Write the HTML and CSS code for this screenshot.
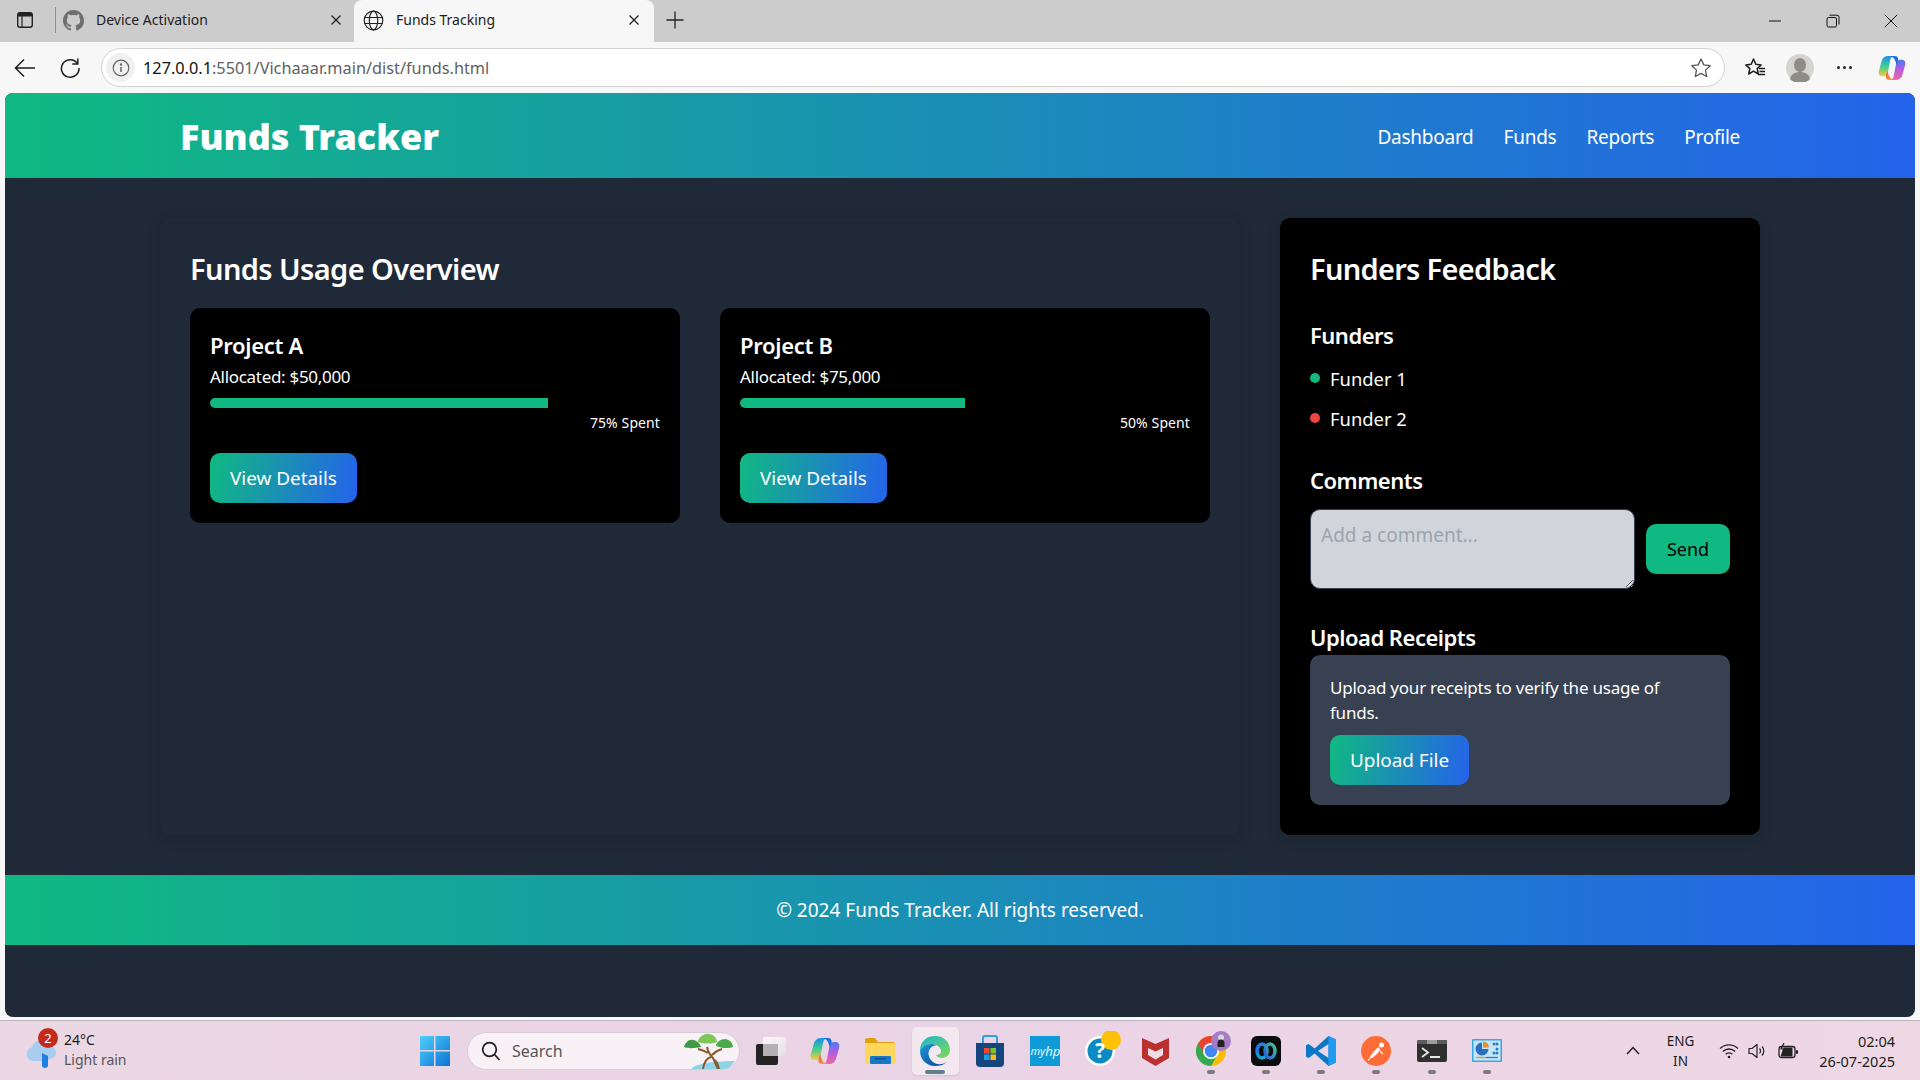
FILE: index.html
```html
<!DOCTYPE html>
<html lang="en">
<head>
    <meta charset="UTF-8">
    <meta name="viewport" content="width=device-width, initial-scale=1.0">
    <title>Funds Tracking</title>
    <link rel="stylesheet" href="styles.css">
</head>
<body>
    <!-- browser tabs -->
    <div class="tabstrip">
        <span class="strip-btn">
            <svg width="20" height="20" viewBox="0 0 20 20"><rect x="2.7" y="2.7" width="14.6" height="14.6" rx="2.5" fill="none" stroke="#222" stroke-width="1.4"/><path d="M3 3.5a1 1 0 0 1 1-1h12a1 1 0 0 1 1 1v3H3z" fill="#222"/><path d="M7 6v11" stroke="#222" stroke-width="1.2"/></svg>
        </span>
        <span class="tab-sep"></span>
        <div class="tab">
            <svg width="21" height="21" viewBox="0 0 16 16"><path fill="#6e6e6e" d="M8 0C3.58 0 0 3.58 0 8c0 3.54 2.29 6.53 5.47 7.59.4.07.55-.17.55-.38 0-.19-.01-.82-.01-1.49-2.01.37-2.53-.49-2.69-.94-.09-.23-.48-.94-.82-1.13-.28-.15-.68-.52-.01-.53.63-.01 1.08.58 1.23.82.72 1.21 1.87.87 2.33.66.07-.52.28-.87.51-1.07-1.78-.2-3.64-.89-3.64-3.95 0-.87.31-1.59.82-2.15-.08-.2-.36-1.02.08-2.12 0 0 .67-.21 2.2.82.64-.18 1.32-.27 2-.27.68 0 1.36.09 2 .27 1.53-1.04 2.2-.82 2.2-.82.44 1.1.16 1.92.08 2.12.51.56.82 1.27.82 2.15 0 3.07-1.87 3.75-3.65 3.95.29.25.54.73.54 1.48 0 1.07-.01 1.93-.01 2.2 0 .21.15.46.55.38A8.013 8.013 0 0016 8c0-4.42-3.58-8-8-8z"/></svg>
            <span class="tab-title">Device Activation</span>
            <svg class="tab-close" width="12" height="12" viewBox="0 0 12 12"><path d="M1.5 1.5l9 9M10.5 1.5l-9 9" stroke="#222" stroke-width="1.3"/></svg>
        </div>
        <div class="tab tab-active">
            <svg width="21" height="21" viewBox="0 0 21 21" fill="none" stroke="#222" stroke-width="1.2"><circle cx="10.5" cy="10.5" r="9.3"/><ellipse cx="10.5" cy="10.5" rx="4.2" ry="9.3"/><path d="M1.6 7.5h17.8M1.6 13.5h17.8"/></svg>
            <span class="tab-title">Funds Tracking</span>
            <svg class="tab-close" width="12" height="12" viewBox="0 0 12 12"><path d="M1.5 1.5l9 9M10.5 1.5l-9 9" stroke="#222" stroke-width="1.3"/></svg>
        </div>
        <svg class="tab-plus" width="18" height="18" viewBox="0 0 18 18"><path d="M9 .5v17M.5 9h17" stroke="#222" stroke-width="1.3"/></svg>
        <div class="win-controls">
            <svg width="14" height="14" viewBox="0 0 14 14"><path d="M1 7h12" stroke="#111" stroke-width="1"/></svg>
            <svg width="14" height="14" viewBox="0 0 14 14" fill="none" stroke="#111" stroke-width="1"><rect x="1" y="3.500" width="9.500" height="9.500" rx="1.500"/><path d="M3.500 1.200h7.500a2 2 0 0 1 2 2v7.300"/></svg>
            <svg width="14" height="14" viewBox="0 0 14 14"><path d="M.8.8l12.400 12.400M13.200.8L.8 13.200" stroke="#111" stroke-width="1"/></svg>
        </div>
    </div>

    <!-- address bar -->
    <div class="toolbar">
        <svg class="tool-back" width="22" height="20" viewBox="0 0 22 20" fill="none" stroke="#1c1c1c" stroke-width="1.5"><path d="M21 10H2M10 1.5L1.5 10l8.500 8.500"/></svg>
        <svg class="tool-reload" width="22" height="22" viewBox="0 0 22 22" fill="none" stroke="#1c1c1c" stroke-width="1.5"><path d="M18.500 6.500A8.800 8.800 0 1 0 20 11"/><path d="M18.800 1.500v5.500h-5.500"/></svg>
        <div class="urlbar">
            <span class="url-info">
                <svg width="18" height="18" viewBox="0 0 18 18" fill="none" stroke="#666" stroke-width="1.2"><circle cx="9" cy="9" r="7.800"/><path d="M9 8v5" stroke-width="1.500"/><circle cx="9" cy="5.500" r=".6" fill="#666"/></svg>
            </span>
            <span class="url-text"><span class="url-host">127.0.0.1</span>:5501/Vichaaar.main/dist/funds.html</span>
            <svg class="url-star" width="22" height="22" viewBox="0 0 22 22"><path d="M11 2l2.800 5.900 6.400.8-4.700 4.400 1.200 6.400L11 16.400l-5.700 3.100 1.200-6.400-4.700-4.400 6.400-.8z" fill="none" stroke="#555" stroke-width="1.300" stroke-linejoin="round"/></svg>
        </div>
        <svg class="tool-fav" width="22" height="22" viewBox="0 0 22 22" fill="none" stroke="#1c1c1c" stroke-width="1.500"><path d="M9.500 2l2.300 5.300 5.400.6-4 3.700 1.100 5.400-4.800-2.800-4.800 2.800 1.100-5.400-4-3.700 5.400-.6z" stroke-linejoin="round"/><path d="M15 11.500h6M15.500 14.500h5.500M14 17.500h7" stroke-width="1.300"/></svg>
        <svg class="tool-avatar" width="28" height="28" viewBox="0 0 28 28"><circle cx="14" cy="14" r="14" fill="#d6d4d0"/><ellipse cx="14" cy="11" rx="6" ry="7" fill="#8f8c87"/><path d="M4 25c1-5 5-7 10-7s9 2 10 7a14 14 0 0 1-20 0z" fill="#8f8c87"/></svg>
        <span class="tool-dots"><i></i><i></i><i></i></span>
        <svg class="tool-copilot" width="28" height="26" viewBox="0 0 30 28">
            <defs>
                <linearGradient id="copA" x1="0" y1="0" x2="0" y2="1"><stop offset="0" stop-color="#1e90e8"/><stop offset=".5" stop-color="#3ccf91"/><stop offset="1" stop-color="#ffc83d"/></linearGradient>
                <linearGradient id="copB" x1="0" y1="0" x2="0" y2="1"><stop offset="0" stop-color="#4a7bf0"/><stop offset=".5" stop-color="#b85be0"/><stop offset="1" stop-color="#f06a9a"/></linearGradient>
                <linearGradient id="copC" x1="0" y1="0" x2="1" y2="1"><stop offset="0" stop-color="#f0503c"/><stop offset="1" stop-color="#ffb347"/></linearGradient>
            </defs>
            <path d="M11 1h7c-3 0-4.500 2-5 5l-2.500 13c-.5 3-2.500 4-4.500 4H4.500C1.500 23 0 20.500.8 17.500L4 6c1-3 3.500-5 7-5z" fill="url(#copA)"/>
            <path d="M19 27h-7c3 0 4.500-2 5-5l2.500-13c.5-3 2.500-4 4.500-4h1.500c3 0 4.500 2.500 3.700 5.500L26 22c-1 3-3.500 5-7 5z" fill="url(#copB)"/>
            <path d="M11 1h7c2.500 0 4 2 3.500 4.500L20 11c-.5-2-1-4-2-6-1-2-3-4-7-4z" fill="#1a6fe0"/>
            <path d="M19 27h-7c-2.500 0-4-2-3.500-4.500L10 17c.5 2 1 4 2 6 1 2 3 4 7 4z" fill="url(#copC)"/>
        </svg>
    </div>

    <!-- the page itself -->
    <div class="site">
        <header class="site-header">
            <div class="header-inner">
                <h1 class="brand">Funds Tracker</h1>
                <nav class="site-nav">
                    <a href="#">Dashboard</a>
                    <a href="#">Funds</a>
                    <a href="#">Reports</a>
                    <a href="#">Profile</a>
                </nav>
            </div>
        </header>

        <main class="content">
            <section class="panel panel-usage">
                <h2>Funds Usage Overview</h2>
                <div class="project-grid">
                    <div class="project-card">
                        <h3>Project A</h3>
                        <p class="allocated">Allocated: $50,000</p>
                        <div class="bar"><div class="bar-fill" style="width: 75%"></div></div>
                        <p class="spent">75% Spent</p>
                        <button class="btn-gradient">View Details</button>
                    </div>
                    <div class="project-card">
                        <h3>Project B</h3>
                        <p class="allocated">Allocated: $75,000</p>
                        <div class="bar"><div class="bar-fill" style="width: 50%"></div></div>
                        <p class="spent">50% Spent</p>
                        <button class="btn-gradient">View Details</button>
                    </div>
                </div>
            </section>

            <aside class="panel panel-feedback">
                <h2>Funders Feedback</h2>
                <h3>Funders</h3>
                <ul class="funder-list">
                    <li><span class="dot dot-green"></span>Funder 1</li>
                    <li><span class="dot dot-red"></span>Funder 2</li>
                </ul>
                <h3>Comments</h3>
                <div class="comment-row">
                    <textarea placeholder="Add a comment..."></textarea>
                    <button class="btn-send">Send</button>
                </div>
                <h3 class="upload-title">Upload Receipts</h3>
                <div class="upload-box">
                    <p>Upload your receipts to verify the usage of funds.</p>
                    <button class="btn-gradient">Upload File</button>
                </div>
            </aside>
        </main>

        <footer class="site-footer">© 2024 Funds Tracker. All rights reserved.</footer>
    </div>

    <!-- windows taskbar -->
    <div class="taskbar">
        <div class="weather">
            <span class="weather-icon">
                <svg width="32" height="36" viewBox="0 0 32 36">
                    <path d="M8 28a7 7 0 0 1-1-13.800A9 9 0 0 1 24 13a6.500 6.500 0 0 1 1 13l-3 2z" fill="#a9cdf0"/>
                    <path d="M17 20l6 3v9a3 3 0 0 1-6 0z" fill="#1f7fe0"/>
                </svg>
                <span class="weather-badge">2</span>
            </span>
            <div class="weather-text">
                <span>24°C</span>
                <span class="weather-sub">Light rain</span>
            </div>
        </div>

        <svg class="win-logo" width="30" height="30" viewBox="0 0 30 30">
            <defs><linearGradient id="winG" x1="0" y1="0" x2="1" y2="1"><stop offset="0" stop-color="#4fd0fb"/><stop offset="1" stop-color="#0a74d6"/></linearGradient></defs>
            <path d="M1 0h13v14H0V1a1 1 0 0 1 1-1zM15.500 0H29a1 1 0 0 1 1 1v13H15.500zM0 15.500h14V30H1a1 1 0 0 1-1-1zM15.500 15.500H30V29a1 1 0 0 1-1 1H15.500z" fill="url(#winG)"/>
        </svg>

        <div class="searchbox">
            <svg width="20" height="20" viewBox="0 0 20 20" fill="none" stroke="#222" stroke-width="1.800"><circle cx="8.500" cy="8.500" r="6.800"/><path d="M13.500 13.500l5 5.500"/></svg>
            <span class="search-text">Search</span>
            <svg class="search-tree" width="52" height="36" viewBox="0 0 52 36">
                <path d="M8 36c4-6 28-8 44-8-3 4-5 6-8 8z" fill="#8fd4e6"/>
                <path d="M24 14c1 5 4 9 6 11l5 11M28 24c-4 1-7 5-8 12M31 27c2 1 4 4 5 9M25 20c-3-2-6-3-10-4M29 22c3-3 6-5 10-6" fill="none" stroke="#8a5a2b" stroke-width="2"/>
                <path d="M1 14c1-4 5-8 9-7 3 0 7 3 8 7-5 1-12 2-17 0z" fill="#3f9a45"/>
                <path d="M15 9c0-5 7-9 11-8 4 0 8 4 8 8-5 2-13 2-19 0z" fill="#7ec857"/>
                <path d="M33 13c0-4 5-7 9-7s8 4 8 8c-5 2-12 1-17-1z" fill="#4ca84a"/>
            </svg>
        </div>

        <div class="task-icons">
            <span class="task-icon">
                <svg width="32" height="32" viewBox="0 0 32 32">
                    <defs><linearGradient id="viewG" x1="0" y1="0" x2="1" y2="1"><stop offset="0" stop-color="#fafafa"/><stop offset="1" stop-color="#e6dde4"/></linearGradient></defs>
                    <rect x="2" y="9" width="22" height="21" rx="2" fill="#232323"/>
                    <rect x="9" y="2" width="23" height="19" rx="2" fill="url(#viewG)"/>
                    <rect x="9" y="9" width="15" height="12" fill="#b4b0b2"/>
                </svg>
            </span>
            <span class="task-icon">
                <svg width="30" height="28" viewBox="0 0 30 28">
                    <path d="M11 1h7c-3 0-4.500 2-5 5l-2.500 13c-.5 3-2.500 4-4.500 4H4.500C1.500 23 0 20.500.8 17.500L4 6c1-3 3.500-5 7-5z" fill="url(#copA)"/>
                    <path d="M19 27h-7c3 0 4.500-2 5-5l2.500-13c.5-3 2.500-4 4.500-4h1.500c3 0 4.500 2.500 3.700 5.500L26 22c-1 3-3.500 5-7 5z" fill="url(#copB)"/>
                    <path d="M11 1h7c2.500 0 4 2 3.500 4.500L20 11c-.5-2-1-4-2-6-1-2-3-4-7-4z" fill="#1a6fe0"/>
                    <path d="M19 27h-7c-2.500 0-4-2-3.500-4.500L10 17c.5 2 1 4 2 6 1 2 3 4 7 4z" fill="url(#copC)"/>
                </svg>
            </span>
            <span class="task-icon">
                <svg width="30" height="26" viewBox="0 0 30 26"><path d="M0 2a2 2 0 0 1 2-2h8l3 4h15a2 2 0 0 1 2 2v20H0z" fill="#e0a10f"/><path d="M0 5h30v21H0z" fill="#ffd65c"/><rect x="5" y="18" width="21" height="8" rx="1" fill="#1878c8"/><rect x="10" y="20" width="11" height="1.500" fill="#0e4f8c"/></svg>
            </span>
            <span class="task-icon task-active">
                <svg width="30" height="30" viewBox="0 0 30 30">
                    <defs>
                        <linearGradient id="edgeA" x1="0" y1="0" x2="1" y2="1"><stop offset="0" stop-color="#1db4d6"/><stop offset="1" stop-color="#7ddb4f"/></linearGradient>
                        <linearGradient id="edgeB" x1="0" y1="0" x2="1" y2="1"><stop offset="0" stop-color="#1b9bd8"/><stop offset="1" stop-color="#0c3f96"/></linearGradient>
                    </defs>
                    <path d="M15 0c9 0 15 6 15 14 0 5-4 8-8 8-3 0-5-1-6-3 3 0 5-1 5-4 0-4-5-7-10-7C7 8 2 11 0 15 0 6 6 0 15 0z" fill="url(#edgeA)"/>
                    <path d="M0 15c2-4 6-7 11-7 2 0 4 .5 5.500 1.500C12 9 8.500 13 8.500 17.500c0 5 4 9.500 9 10.500 3 .5 6 0 9-2-3 3-7 4-11.500 4C6 30 0 23 0 15z" fill="url(#edgeB)"/>
                </svg>
            </span>
            <span class="task-icon">
                <svg width="30" height="32" viewBox="0 0 30 32"><path d="M8 9V3a2 2 0 0 1 2-2h10a2 2 0 0 1 2 2v6" fill="none" stroke="#28a0e8" stroke-width="2"/><path d="M1 8h28v20a4 4 0 0 1-4 4H5a4 4 0 0 1-4-4z" fill="#14457c"/><rect x="9" y="13" width="5.500" height="5.500" fill="#ee4b2b"/><rect x="15.500" y="13" width="5.500" height="5.500" fill="#7cc031"/><rect x="9" y="19.500" width="5.500" height="5.500" fill="#1d9fe8"/><rect x="15.500" y="19.500" width="5.500" height="5.500" fill="#fdb813"/></svg>
            </span>
            <span class="task-icon">
                <span class="myhp">my<b>hp</b></span>
            </span>
            <span class="task-icon">
                <svg width="40" height="40" viewBox="0 0 40 40"><circle cx="19" cy="20" r="15" fill="#fff"/><circle cx="19" cy="20" r="12.500" fill="#0b8ac4"/><circle cx="30" cy="9" r="10" fill="#ffc107"/><text x="19" y="27" class="help-mark">?</text></svg>
            </span>
            <span class="task-icon">
                <svg width="27" height="30" viewBox="0 0 27 30"><path d="M0 2l13.500 6L27 2v20l-13.500 8L0 22z" fill="#bb302e"/><path d="M6 12l7.500 3.500L21 12v7l-7.500 4.500L6 19z" fill="#efdde6"/></svg>
            </span>
            <span class="task-icon task-running">
                <svg width="40" height="40" viewBox="0 0 40 40">
                    <circle cx="20" cy="20" r="15" fill="#fbbc04"/>
                    <path d="M7 12.500A15 15 0 0 0 20 35l6.500-11.250L20 20z" fill="#34a853"/>
                    <path d="M7 12.500a15 15 0 0 1 26 0H20l-6.500 11.250z" fill="#ea4335"/>
                    <circle cx="20" cy="20" r="8" fill="#fff"/><circle cx="20" cy="20" r="6.300" fill="#4285f4"/>
                    <circle cx="30" cy="10" r="10" fill="#a77bc5"/>
                    <circle cx="30" cy="6.500" r="3" fill="#d8d8d8"/><path d="M26.500 16v-4a3.500 3.500 0 0 1 7 0v4z" fill="#222"/>
                </svg>
            </span>
            <span class="task-icon task-running">
                <svg width="30" height="30" viewBox="0 0 30 30">
                    <defs>
                        <linearGradient id="webA" x1="0" y1="0" x2="1" y2="1"><stop offset="0" stop-color="#1c6fe8"/><stop offset="1" stop-color="#19b8c8"/></linearGradient>
                        <linearGradient id="webB" x1="1" y1="0" x2="0" y2="1"><stop offset="0" stop-color="#3fc98a"/><stop offset="1" stop-color="#2758e0"/></linearGradient>
                    </defs>
                    <rect width="30" height="30" rx="6" fill="#0b0b0e"/>
                    <ellipse cx="11" cy="15" rx="5" ry="7" fill="none" stroke="url(#webA)" stroke-width="3.500"/>
                    <ellipse cx="19" cy="15" rx="5" ry="7" fill="none" stroke="url(#webB)" stroke-width="3.500"/>
                </svg>
            </span>
            <span class="task-icon task-running">
                <svg width="30" height="30" viewBox="0 0 100 100"><path fill-rule="evenodd" d="M75 0L29 42 9 27 0 31v38l9 4 20-15 46 42 25-12V12zM75 27L40 50l35 23z" fill="#0a78c4"/><path d="M75 0l25 12v76l-25 12z" fill="#1f9cf0"/></svg>
            </span>
            <span class="task-icon task-running">
                <svg width="30" height="30" viewBox="0 0 30 30"><circle cx="15" cy="15" r="15" fill="#ff6c37"/><path d="M8 23l2-4 5-6 3-2 1 3-3 4-5 4z" fill="#fff"/><circle cx="20.500" cy="9" r="2.500" fill="#fff"/><path d="M19 15l3 3M8 23l-1 1.500" stroke="#fff" stroke-width="1.200"/></svg>
            </span>
            <span class="task-icon task-running">
                <svg width="30" height="22" viewBox="0 0 30 22"><rect width="30" height="22" rx="2" fill="#2f2f2f"/><path d="M0 2a2 2 0 0 1 2-2h28v4H0z" fill="#5c5c5c"/><rect x="10" y="0" width="10" height="4" fill="#9a9a9a"/><path d="M5 8l6 4.500L5 17" fill="none" stroke="#e8e8e8" stroke-width="1.800"/><path d="M13 17h10" stroke="#e8e8e8" stroke-width="2"/></svg>
            </span>
            <span class="task-icon task-running">
                <svg width="30" height="23" viewBox="0 0 30 23">
                    <rect width="30" height="23" rx="1" fill="#38a7e6"/><rect x="1.500" y="1.500" width="27" height="20" fill="#c4e5fa"/>
                    <path d="M10 3.500a6.500 6.500 0 1 0 6.500 6.500H10z" fill="#2b6fc0"/><path d="M11 2.500a6 6 0 0 1 6 6h-6z" fill="#ea8f22"/>
                    <circle cx="22" cy="5" r="1.500" fill="#2b7cc4"/><circle cx="25" cy="5" r="1.500" fill="#2b7cc4"/><circle cx="25" cy="10" r="1.500" fill="#2b7cc4"/><circle cx="22" cy="14" r="1.500" fill="#2b7cc4"/><circle cx="25" cy="14" r="1.500" fill="#2b7cc4"/>
                    <path d="M4 18.500h10" stroke="#ea8f22" stroke-width="1.300"/><path d="M14 18.500h12" stroke="#2b7cc4" stroke-width="1.300"/>
                </svg>
            </span>
        </div>

        <div class="tray">
            <svg class="tray-chevron" width="14" height="9" viewBox="0 0 14 9"><path d="M1 8l6-6.500L13 8" fill="none" stroke="#222" stroke-width="1.500"/></svg>
            <div class="tray-lang"><span>ENG</span><span>IN</span></div>
            <svg class="tray-wifi" width="20" height="16" viewBox="0 0 20 16" fill="none" stroke="#222" stroke-width="1.300"><path d="M1 5.500a13 13 0 0 1 18 0M3.800 8.500a9 9 0 0 1 12.400 0M6.600 11.300a5 5 0 0 1 6.800 0"/><circle cx="10" cy="14" r="1.300" fill="#222" stroke="none"/></svg>
            <svg class="tray-vol" width="20" height="16" viewBox="0 0 20 16" fill="none" stroke="#222" stroke-width="1.200"><path d="M1 5.500h3L9 1.500v13L4 10.500H1z" stroke-linejoin="round"/><path d="M11.500 5.500a3.500 3.500 0 0 1 0 5M14 3.500a6.500 6.500 0 0 1 0 9"/></svg>
            <svg class="tray-batt" width="21" height="16" viewBox="0 0 21 16"><rect x="1" y="3.500" width="16" height="11" rx="2.500" fill="none" stroke="#222" stroke-width="1.300"/><path d="M2.500 13.500l3-9h9v9z" fill="#222"/><rect x="18" y="7" width="2" height="4" rx="1" fill="#222"/><path d="M6 0L3 6h3L5 9" fill="none" stroke="#222" stroke-width="1.200"/></svg>
            <div class="tray-clock"><span>02:04</span><span>26-07-2025</span></div>
        </div>
    </div>
</body>
</html>
```

FILE: styles.css
```css
* {
    box-sizing: border-box;
}
html, body {
    height: 100%;
}
body {
    margin: 0;
    height: 1080px;
    overflow: hidden;
    display: flex;
    flex-direction: column;
    font-family: "Noto Sans", sans-serif;
    background-color: #f7f7f7;
    color: #ffffff;
}
h1, h2, h3, p, ul {
    margin: 0;
    padding: 0;
}

/* browser chrome */
.tabstrip {
    height: 42px;
    background-color: #cccccc;
    display: flex;
    align-items: center;
    color: #1c1c1c;
}
.strip-btn {
    display: flex;
    margin-left: 15px;
    margin-bottom: 2px;
}
.tab-sep {
    width: 1px;
    height: 26px;
    background-color: #8e8e8e;
    margin-left: 20px;
    margin-bottom: 2px;
}
.tab {
    height: 42px;
    width: 298px;
    display: flex;
    align-items: center;
    padding: 0 12px 2px 7px;
    font-size: 14px;
}
.tab-title {
    margin-left: 12px;
    margin-bottom: 2px;
    flex: 1;
}
.tab-close {
    flex: none;
}
.tab-active {
    width: 300px;
    background-color: #f7f7f7;
    border-radius: 8px 8px 0 0;
    padding: 0 14px 2px 9px;
}
.tab-plus {
    margin-left: 12px;
    margin-bottom: 2px;
}
.win-controls {
    margin-left: auto;
    display: flex;
    gap: 44px;
    padding-right: 22px;
    align-items: center;
}
.toolbar {
    height: 51px;
    background-color: #f7f7f7;
    display: flex;
    align-items: center;
}
.tool-back {
    margin-left: 14px;
}
.tool-reload {
    margin-left: 23px;
}
.urlbar {
    flex: none;
    width: 1624px;
    height: 39px;
    margin-left: 20px;
    background-color: #ffffff;
    border: 1.500px solid #d2d2d2;
    border-radius: 20px;
    display: flex;
    align-items: center;
    padding-left: 4px;
    padding-right: 12px;
}
.url-info {
    width: 29px;
    height: 29px;
    border-radius: 50%;
    background-color: #f0f0f0;
    display: flex;
    align-items: center;
    justify-content: center;
}
.url-text {
    margin-left: 8px;
    font-size: 16.300px;
    color: #5f5f5f;
}
.url-host {
    color: #111111;
}
.url-star {
    margin-left: auto;
}
.tool-fav {
    margin-left: 19px;
}
.tool-avatar {
    margin-left: 20px;
}
.tool-dots {
    display: flex;
    gap: 3px;
    margin-left: 23px;
}
.tool-dots i {
    width: 3px;
    height: 3px;
    border-radius: 50%;
    background-color: #222222;
}
.tool-copilot {
    margin-left: 26px;
}

/* page */
.site {
    height: 924px;
    margin: 0 5px;
    background-color: #1f2937;
    border-radius: 8px;
    overflow: hidden;
}
.site-header {
    height: 85px;
    background: linear-gradient(90deg, #10b981, #2563eb);
}
.header-inner {
    width: 1600px;
    height: 100%;
    margin: 0 auto;
    padding: 2px 20px 0;
    display: flex;
    align-items: center;
    justify-content: space-between;
}
.brand {
    font-size: 36px;
    font-weight: 900;
}
.site-nav {
    display: flex;
    gap: 30px;
}
.site-nav a {
    color: #ffffff;
    text-decoration: none;
    font-size: 19px;
    letter-spacing: -0.25px;
}
.content {
    width: 1600px;
    margin: 0 auto;
    padding: 40px 0;
    display: flex;
    gap: 40px;
}
.panel {
    padding: 30px;
    border-radius: 10px;
    box-shadow: 0 4px 15px rgba(0, 0, 0, 0.12);
}
.panel-usage {
    width: 1080px;
}
.panel-feedback {
    width: 480px;
    background-color: #000000;
}
.panel h2 {
    font-size: 29px;
    font-weight: 600;
    line-height: 42px;
    letter-spacing: -0.6px;
}
.panel-usage h2 {
    margin-bottom: 18px;
}
.panel-feedback h2 {
    margin-bottom: 31px;
    letter-spacing: -0.7px;
}
.panel h3 {
    font-size: 22px;
    font-weight: 600;
    line-height: 28px;
    letter-spacing: -0.5px;
    margin-bottom: 2px;
}
.project-grid {
    display: grid;
    grid-template-columns: 1fr 1fr;
    gap: 40px;
}
.project-card {
    background-color: #000000;
    border-radius: 10px;
    padding: 20px;
    height: 215px;
}
.project-card h3 {
    line-height: 34px;
    letter-spacing: -0.3px;
}
.allocated {
    font-size: 17px;
    line-height: 26px;
    letter-spacing: -0.3px;
}
.bar {
    height: 10px;
    margin-top: 8px;
    border-radius: 5px;
    overflow: hidden;
}
.bar-fill {
    height: 100%;
    background-color: #10b981;
}
.spent {
    margin-top: 5px;
    font-size: 14px;
    line-height: 20px;
    letter-spacing: 0.1px;
    text-align: right;
}
.project-card .btn-gradient {
    margin-top: 20px;
}
.btn-gradient {
    height: 50px;
    padding: 0 20px;
    border: none;
    border-radius: 10px;
    background: linear-gradient(100deg, #10b981, #2563eb);
    color: #ffffff;
    font-family: inherit;
    font-size: 18.900px;
    display: block;
}
.funder-list {
    list-style: none;
    margin-top: 15px;
    margin-bottom: 34px;
}
.funder-list li {
    display: flex;
    align-items: center;
    gap: 10px;
    height: 28px;
    font-size: 18.400px;
}
.funder-list li + li {
    margin-top: 12px;
}
.dot {
    width: 10px;
    height: 10px;
    border-radius: 50%;
}
.dot-green {
    background-color: #10b981;
}
.dot-red {
    background-color: #ef4444;
}
.comment-row {
    margin-top: 15px;
    display: flex;
    align-items: center;
    gap: 11px;
}
.comment-row textarea {
    flex: 1;
    height: 80px;
    padding: 12px 9px 9px 10px;
    border: 1px solid #374151;
    border-radius: 10px;
    background-color: #d1d5db;
    font-family: inherit;
    font-size: 19px;
}
.comment-row textarea::placeholder {
    color: #9ca3af;
}
.btn-send {
    width: 84px;
    height: 50px;
    border: none;
    border-radius: 10px;
    background-color: #10b981;
    color: #000000;
    font-family: inherit;
    font-size: 18px;
}
.upload-title {
    margin-top: 34px;
}
.upload-box {
    margin-top: 4px;
    padding: 20px;
    background-color: #374151;
    border-radius: 10px;
}
.upload-box p {
    font-size: 17px;
    line-height: 25px;
    letter-spacing: -0.23px;
    margin-bottom: 10px;
}
.site-footer {
    height: 70px;
    display: flex;
    align-items: center;
    justify-content: center;
    background: linear-gradient(90deg, #10b981, #2563eb);
    font-size: 19px;
}

/* taskbar */
.taskbar {
    height: 60px;
    margin-top: 3px;
    border-top: 1px solid #bdb5bb;
    background: linear-gradient(90deg, #ecd7e4, #e9d3e6 50%, #eed8e4);
    display: flex;
    align-items: center;
    color: #1c1c1c;
}
.weather {
    width: 420px;
    padding-left: 25px;
    display: flex;
    align-items: center;
}
.weather-icon {
    position: relative;
    display: flex;
}
.weather-badge {
    position: absolute;
    top: -5px;
    left: 13px;
    width: 20px;
    height: 20px;
    border-radius: 50%;
    background-color: #c42b1c;
    color: #ffffff;
    font-size: 13px;
    display: flex;
    align-items: center;
    justify-content: center;
}
.weather-text {
    margin-left: 7px;
    margin-bottom: 2px;
    display: flex;
    flex-direction: column;
    font-size: 14px;
    line-height: 20px;
}
.weather-sub {
    color: #555555;
}
.searchbox {
    width: 273px;
    height: 38px;
    margin-left: 17px;
    padding: 0 4px 0 13px;
    background-color: #f8f1f6;
    border: 1px solid #d9ccd5;
    border-radius: 19px;
    display: flex;
    align-items: center;
}
.search-text {
    margin-left: 11px;
    font-size: 16px;
    color: #555555;
}
.search-tree {
    margin-left: auto;
}
.task-icons {
    display: flex;
    margin-left: 2px;
}
.task-icon {
    width: 55.200px;
    height: 48px;
    display: flex;
    align-items: center;
    justify-content: center;
    position: relative;
}
.task-active {
    width: 47px;
    margin: 0 4px;
    background-color: #f3e8f0;
    border-radius: 5px;
    box-shadow: 0 1px 2px rgba(0, 0, 0, 0.1);
}
.task-active::after,
.task-running::after {
    content: "";
    position: absolute;
    bottom: 1px;
    left: 50%;
    width: 8px;
    height: 4px;
    margin-left: -4px;
    border-radius: 2px;
    background-color: #7a7a7a;
}
.task-active::after {
    width: 20px;
    margin-left: -10px;
    background-color: #5f7f8f;
}
.myhp {
    width: 30px;
    height: 30px;
    background-color: #0f9bd7;
    color: #e8f6fc;
    font-size: 11px;
    font-style: italic;
    display: flex;
    align-items: center;
    justify-content: center;
}
.myhp b {
    font-size: 13px;
    font-weight: 400;
}
.help-mark {
    fill: #ffffff;
    font-size: 21px;
    font-weight: 700;
    text-anchor: middle;
}
.tray {
    margin-left: auto;
    padding-right: 25px;
    display: flex;
    align-items: center;
}
.tray-lang {
    margin-left: 27px;
    display: flex;
    flex-direction: column;
    align-items: center;
    font-size: 13.500px;
    line-height: 20px;
}
.tray-wifi {
    margin-left: 24.500px;
}
.tray-vol {
    margin-left: 9.500px;
}
.tray-batt {
    margin-left: 10px;
}
.tray-clock {
    margin-left: 20px;
    display: flex;
    flex-direction: column;
    align-items: flex-end;
    font-size: 14.500px;
    line-height: 20px;
}
```
